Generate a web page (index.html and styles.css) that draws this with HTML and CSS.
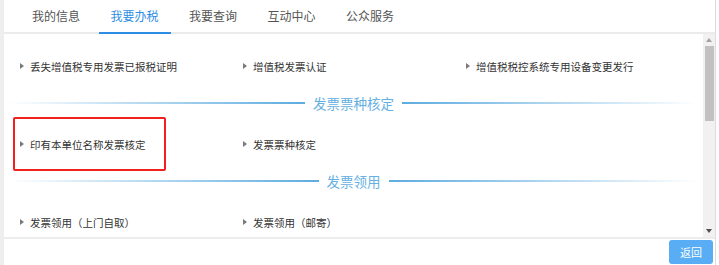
FILE: index.html
```html
<!DOCTYPE html>
<html lang="zh-CN">
<head>
    <meta charset="UTF-8">
    <meta name="viewport" content="width=device-width, initial-scale=1.0">
    <title>我要办税</title>
    <link rel="stylesheet" href="styles.css">
</head>
<body>
    <div class="panel">
        <ul class="tabs">
            <li class="tab">我的信息</li>
            <li class="tab active">我要办税</li>
            <li class="tab">我要查询</li>
            <li class="tab">互动中心</li>
            <li class="tab">公众服务</li>
        </ul>

        <div class="main">
            <div class="content">
                <div class="row">
                    <div class="item">丢失增值税专用发票已报税证明</div>
                    <div class="item">增值税发票认证</div>
                    <div class="item">增值税税控系统专用设备变更发行</div>
                </div>
                <div class="divider"><span>发票票种核定</span></div>
                <div class="row">
                    <div class="item marked">印有本单位名称发票核定</div>
                    <div class="item">发票票种核定</div>
                </div>
                <div class="divider"><span>发票领用</span></div>
                <div class="row">
                    <div class="item">发票领用（上门自取）</div>
                    <div class="item">发票领用（邮寄）</div>
                </div>
            </div>
            <div class="scrollbar">
                <span class="arrow up"></span>
                <div class="track"><div class="thumb"></div></div>
                <span class="arrow down"></span>
            </div>
        </div>

        <div class="footer">
            <button class="btn-back" type="button">返回</button>
        </div>
    </div>
</body>
</html>
```

FILE: styles.css
```css
body {
    font-family: "Noto Sans CJK SC", "Liberation Sans", sans-serif;
    background-color: #fff;
    margin: 0;
    padding: 0;
}

.panel {
    width: 711px;
    height: 265px;
    border-left: 4px solid #eeeeee;
    border-right: 1px solid #dcdcdc;
    display: flex;
    flex-direction: column;
}

.tabs {
    list-style: none;
    margin: 0;
    padding: 0 0 0 16px;
    height: 32px;
    display: flex;
    border-bottom: 2px solid #ebebeb;
}

.tab {
    padding: 0 12px;
    margin-right: 6.5px;
    line-height: 32px;
    font-size: 12px;
    color: #555;
}

.tab.active {
    color: #2d8ee6;
    border-bottom: 2px solid #2d8ee6;
    height: 32px;
}

.main {
    display: flex;
    height: 203px;
}

.content {
    flex: 1;
    overflow: hidden;
    padding-top: 12px;
}

.row {
    display: grid;
    grid-template-columns: 223px 223px 223px;
    padding-left: 16px;
    height: 40px;
}

.item {
    position: relative;
    display: flex;
    align-items: center;
    font-size: 10.5px;
    color: #333;
}

.item::before {
    content: "";
    border-left: 4px solid #7a7a7a;
    border-top: 3px solid transparent;
    border-bottom: 3px solid transparent;
    margin-right: 6px;
}

.item.marked::after {
    content: "";
    position: absolute;
    top: -7px;
    bottom: -7px;
    left: -7px;
    width: 149px;
    border: 2px solid #f32020;
    border-radius: 2px;
}

.divider {
    display: flex;
    align-items: center;
    height: 38px;
    padding: 0 4px;
    margin-top: -2px;
    margin-bottom: 2px;
}

.divider::before,
.divider::after {
    content: "";
    flex: 1;
    height: 2px;
}

.divider::before {
    background: linear-gradient(to right, rgba(96, 176, 226, 0), #5eace0);
}

.divider::after {
    background: linear-gradient(to left, rgba(96, 176, 226, 0), #5eace0);
}

.divider span {
    margin: 0 8px;
    font-size: 13.5px;
    color: #66b0e2;
}

.scrollbar {
    width: 12px;
    background-color: #f1f1f1;
    display: flex;
    flex-direction: column;
    align-items: center;
}

.arrow {
    height: 12px;
    display: flex;
    align-items: center;
    justify-content: center;
}

.arrow.up::before {
    content: "";
    border-bottom: 4px solid #a3a3a3;
    border-left: 3.5px solid transparent;
    border-right: 3.5px solid transparent;
}

.arrow.down::before {
    content: "";
    border-top: 4px solid #505050;
    border-left: 3.5px solid transparent;
    border-right: 3.5px solid transparent;
}

.track {
    flex: 1;
    width: 100%;
    display: flex;
    justify-content: center;
}

.thumb {
    width: 9px;
    height: 75px;
    background-color: #c1c1c1;
}

.footer {
    flex: 1;
    border-top: 2px solid #ececec;
    display: flex;
    justify-content: flex-end;
    padding: 1px 2px 2px 0;
}

.btn-back {
    width: 44px;
    height: 24px;
    border: none;
    border-radius: 3px;
    background-color: #58adf4;
    color: #fff;
    font-family: inherit;
    font-size: 11px;
    padding: 0;
}
```
